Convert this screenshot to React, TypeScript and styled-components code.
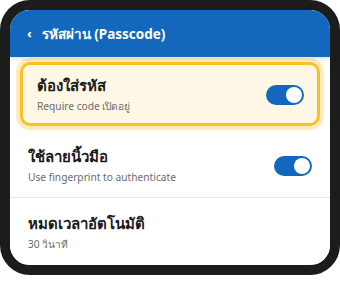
import React from "react";
import styled, { createGlobalStyle } from "styled-components";

const GlobalStyle = createGlobalStyle`
  html, body { margin: 0; padding: 0; background: #ffffff; }
  body { font-family: "Noto Sans", "Open Sans", sans-serif; }
  * { box-sizing: border-box; }
`;

const Frame = styled.div`
  width: 340px;
  height: 275px;
  border: 10px solid #1c1c1c;
  border-radius: 30px;
  background: #ffffff;
  overflow: hidden;
  display: flex;
  flex-direction: column;
`;

const Header = styled.header`
  height: 47px;
  flex-shrink: 0;
  background: #1368bd;
  color: #ffffff;
  display: flex;
  align-items: center;
  padding: 0 0 0 17px;
  gap: 10px;
  box-shadow: 0 2px 4px rgba(0, 0, 0, 0.12);
  position: relative;
  z-index: 1;
`;

const Back = styled.span`
  font-size: 13px;
  font-weight: 700;
  line-height: 1;
  margin-top: -1px;
`;

const HeaderTitle = styled.h1`
  margin: 0;
  font-size: 13.5px;
  font-weight: 700;
`;

const List = styled.div`
  padding-top: 5px;
  display: flex;
  flex-direction: column;
`;

const Row = styled.div<{ $highlight?: boolean; $divider?: boolean }>`
  display: flex;
  align-items: center;
  justify-content: space-between;
  padding: ${(p) => (p.$highlight ? "10px 13px 9px 14px" : "15px 18px 12px")};
  margin: ${(p) => (p.$highlight ? "0 10px 5px" : "0")};
  background: ${(p) => (p.$highlight ? "#fff8e6" : "#ffffff")};
  border: ${(p) => (p.$highlight ? "3px solid #fbbf2a" : "none")};
  border-radius: ${(p) => (p.$highlight ? "10px" : "0")};
  box-shadow: ${(p) =>
    p.$highlight ? "0 0 0 4px rgba(251, 191, 42, 0.3)" : "none"};
  border-bottom: ${(p) =>
    p.$highlight ? "3px solid #fbbf2a" : p.$divider ? "1px solid #e6e6e6" : "none"};
`;

const Texts = styled.div`
  display: flex;
  flex-direction: column;
`;

const Title = styled.div`
  font-size: 15px;
  font-weight: 700;
  line-height: 20px;
  color: #1a1a1a;
`;

const Subtitle = styled.div`
  font-size: 10.2px;
  line-height: 16px;
  margin-top: 3px;
  color: #6b6b6b;
`;

const Toggle = styled.div<{ $on: boolean }>`
  width: 38px;
  height: 20px;
  border-radius: 10px;
  background: ${(p) => (p.$on ? "#1368bd" : "#c8c8c8")};
  display: flex;
  align-items: center;
  justify-content: ${(p) => (p.$on ? "flex-end" : "flex-start")};
  padding: 0 2px;
  flex-shrink: 0;
`;

const Knob = styled.span`
  width: 16px;
  height: 16px;
  border-radius: 50%;
  background: #ffffff;
`;

type Item = {
  title: string;
  subtitle: string;
  toggle?: boolean;
  highlight?: boolean;
  divider?: boolean;
};

const items: Item[] = [
  { title: "ต้องใส่รหัส", subtitle: "Require code เปิดอยู่", toggle: true, highlight: true },
  { title: "ใช้ลายนิ้วมือ", subtitle: "Use fingerprint to authenticate", toggle: true, divider: true },
  { title: "หมดเวลาอัตโนมัติ", subtitle: "30 วินาที" },
];

export default function App() {
  return (
    <>
      <GlobalStyle />
      <Frame>
        <Header>
          <Back>‹</Back>
          <HeaderTitle>รหัสผ่าน (Passcode)</HeaderTitle>
        </Header>
        <List>
          {items.map((it) => (
            <Row key={it.title} $highlight={it.highlight} $divider={it.divider}>
              <Texts>
                <Title>{it.title}</Title>
                <Subtitle>{it.subtitle}</Subtitle>
              </Texts>
              {it.toggle && (
                <Toggle $on>
                  <Knob />
                </Toggle>
              )}
            </Row>
          ))}
        </List>
      </Frame>
    </>
  );
}
